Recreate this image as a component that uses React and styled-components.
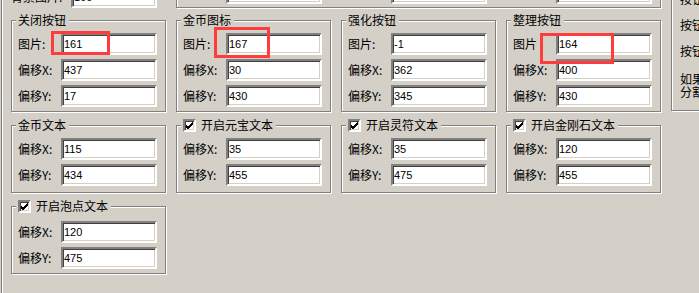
import React from "react";
import styled, { createGlobalStyle } from "styled-components";

const GlobalStyle = createGlobalStyle`
  html, body {
    margin: 0;
    padding: 0;
    background: #d4d0c8;
  }
  body {
    font-family: "Noto Sans CJK SC", "Liberation Sans", sans-serif;
    font-size: 12px;
    color: #000;
  }
`;

const Page = styled.div`
  position: relative;
  width: 699px;
  height: 293px;
  overflow: hidden;
  background: #d4d0c8;
  padding-left: 1px;
  box-sizing: border-box;
`;

const Sheet = styled.div`
  display: flex;
  align-items: flex-start;
  gap: 10px;
  height: 100%;
  box-sizing: border-box;
  border-left: 1px solid #808080;
  box-shadow: inset 1px 0 0 #fff;
  padding-left: 9px;
`;

const LeftArea = styled.div`
  display: flex;
  flex-direction: column;
  width: 650px;
  flex-shrink: 0;
`;

const TopStrip = styled.div`
  display: flex;
  align-items: flex-end;
  gap: 10px;
  height: 11px;
`;

const TopField = styled.div`
  display: flex;
  align-items: center;
  width: 155px;
  margin-bottom: 3px;
`;

const TopGroup = styled.div`
  display: grid;
  grid-template-columns: repeat(3, 155px);
  column-gap: 10px;
  width: 485px;
  box-sizing: border-box;
  border: 1px solid #808080;
  box-shadow: inset 1px 1px 0 #fff, 1px 1px 0 #fff;
  padding: 0 0 3px;
  margin-bottom: 3px;
`;

const TopCell = styled.div`
  display: flex;
  padding-left: 49px;
`;

const GroupRow = styled.div`
  display: grid;
  grid-template-columns: repeat(4, 155px);
  column-gap: 10px;
  margin-top: ${(p) => p.$mt}px;
`;

const Group = styled.div`
  position: relative;
  box-sizing: border-box;
  height: ${(p) => p.$h}px;
  border: 1px solid #808080;
  box-shadow: inset 1px 1px 0 #fff, 1px 1px 0 #fff;
  padding: ${(p) => p.$pt}px 0 0 6px;
  display: flex;
  flex-direction: column;
  gap: 4px;
`;

const Title = styled.div`
  position: absolute;
  top: -8px;
  left: 4px;
  height: 14px;
  line-height: 14px;
  padding: 0 3px 0 2px;
  background: #d4d0c8;
  display: flex;
  align-items: center;
  gap: 5px;
  white-space: nowrap;
`;

const Check = styled.span`
  display: inline-flex;
  align-items: center;
  justify-content: center;
  width: 13px;
  height: 13px;
  box-sizing: border-box;
  border: 2px solid;
  border-color: #808080 #fff #fff #808080;
  box-shadow: inset 1px 1px 0 #404040, inset -1px -1px 0 #d4d0c8;
  background: #fff;
`;

const Field = styled.div`
  display: flex;
  align-items: center;
  height: 22px;
`;

const Label = styled.span`
  width: ${(p) => p.$w || 43}px;
  flex-shrink: 0;
  line-height: 22px;
  white-space: nowrap;
`;

const Input = styled.input`
  width: ${(p) => p.$w || 96}px;
  height: 22px;
  margin: 0;
  box-sizing: border-box;
  border: 2px solid;
  border-color: #808080 #fff #fff #808080;
  box-shadow: inset 1px 1px 0 #404040, inset -1px -1px 0 #d4d0c8;
  background: #fff;
  padding: 0 0 0 1px;
  font-family: "Liberation Sans", Arial, sans-serif;
  font-size: 11px;
  color: #000;
  outline: none;
`;

const RightPanel = styled.div`
  flex-shrink: 0;
  width: 80px;
  height: 131px;
  margin-top: -20px;
  box-sizing: border-box;
  border: 1px solid #808080;
  box-shadow: inset 1px 1px 0 #fff, 1px 1px 0 #fff;
  padding: 7px 0 0 8px;
`;

const PanelRow = styled.div`
  height: 22px;
  line-height: 22px;
  margin-bottom: 4px;
  white-space: nowrap;
`;

const PanelNote = styled.div`
  margin-top: 10px;
  line-height: 13px;
  white-space: nowrap;
`;

const Mark = styled.div`
  position: absolute;
  left: ${(p) => p.$x}px;
  top: ${(p) => p.$y}px;
  width: ${(p) => p.$w}px;
  height: ${(p) => p.$h}px;
  box-sizing: border-box;
  border: 3px solid #ff3c3c;
  pointer-events: none;
`;

const CheckMark = () => (
  <svg width="9" height="9" viewBox="0 0 9 9">
    <path d="M1 4 L3 6 L8 1 M1 5 L3 7 L8 2 M1 6 L3 8 L8 3" stroke="#000" strokeWidth="1" fill="none" shapeRendering="crispEdges" />
  </svg>
);

const rows = [
  {
    mt: 9,
    h: 92,
    pt: 12,
    groups: [
      { title: "关闭按钮", fields: [["图片:", "161"], ["偏移X:", "437"], ["偏移Y:", "17"]] },
      { title: "金币图标", fields: [["图片:", "167"], ["偏移X:", "30"], ["偏移Y:", "430"]] },
      { title: "强化按钮", fields: [["图片:", "-1"], ["偏移X:", "362"], ["偏移Y:", "345"]] },
      { title: "整理按钮", fields: [["图片", "164"], ["偏移X:", "400"], ["偏移Y:", "430"]] },
    ],
  },
  {
    mt: 13,
    h: 68,
    pt: 12,
    groups: [
      { title: "金币文本", fields: [["偏移X:", "115"], ["偏移Y:", "434"]] },
      { title: "开启元宝文本", checked: true, fields: [["偏移X:", "35"], ["偏移Y:", "455"]] },
      { title: "开启灵符文本", checked: true, fields: [["偏移X:", "35"], ["偏移Y:", "475"]] },
      { title: "开启金刚石文本", checked: true, fields: [["偏移X:", "120"], ["偏移Y:", "455"]] },
    ],
  },
  {
    mt: 13,
    h: 68,
    pt: 14,
    groups: [
      { title: "开启泡点文本", checked: true, fields: [["偏移X:", "120"], ["偏移Y:", "475"]] },
    ],
  },
];

const marks = [
  { x: 51, y: 31, w: 59, h: 24 },
  { x: 214, y: 27, w: 56, h: 31 },
  { x: 540, y: 33, w: 74, h: 31 },
];

const App = () => {
  return (
    <Page>
      <GlobalStyle />
      <Sheet>
        <LeftArea>
          <TopStrip>
            <TopField>
              <Label $w={60}>背景图片:</Label>
              <Input $w={86} value="160" readOnly />
            </TopField>
            <TopGroup>
              {["166", "168", "163"].map((v, i) => (
                <TopCell key={i}>
                  <Input value={v} readOnly />
                </TopCell>
              ))}
            </TopGroup>
          </TopStrip>

          {rows.map((row, ri) => (
            <GroupRow key={ri} $mt={row.mt}>
              {row.groups.map((g) => (
                <Group key={g.title} $h={row.h} $pt={row.pt}>
                  <Title>
                    {g.checked && (
                      <Check>
                        <CheckMark />
                      </Check>
                    )}
                    {g.title}
                  </Title>
                  {g.fields.map(([label, value]) => (
                    <Field key={label}>
                      <Label>{label}</Label>
                      <Input value={value} readOnly />
                    </Field>
                  ))}
                </Group>
              ))}
            </GroupRow>
          ))}
        </LeftArea>

        <RightPanel>
          <PanelRow>按钮图片:</PanelRow>
          <PanelRow>按钮偏移X:</PanelRow>
          <PanelRow>按钮偏移Y:</PanelRow>
          <PanelNote>
            如果不需要显示
            <br />
            分割线请设为-1
          </PanelNote>
        </RightPanel>
      </Sheet>

      {marks.map((m, i) => (
        <Mark key={i} $x={m.x} $y={m.y} $w={m.w} $h={m.h} />
      ))}
    </Page>
  );
};

export default App;
